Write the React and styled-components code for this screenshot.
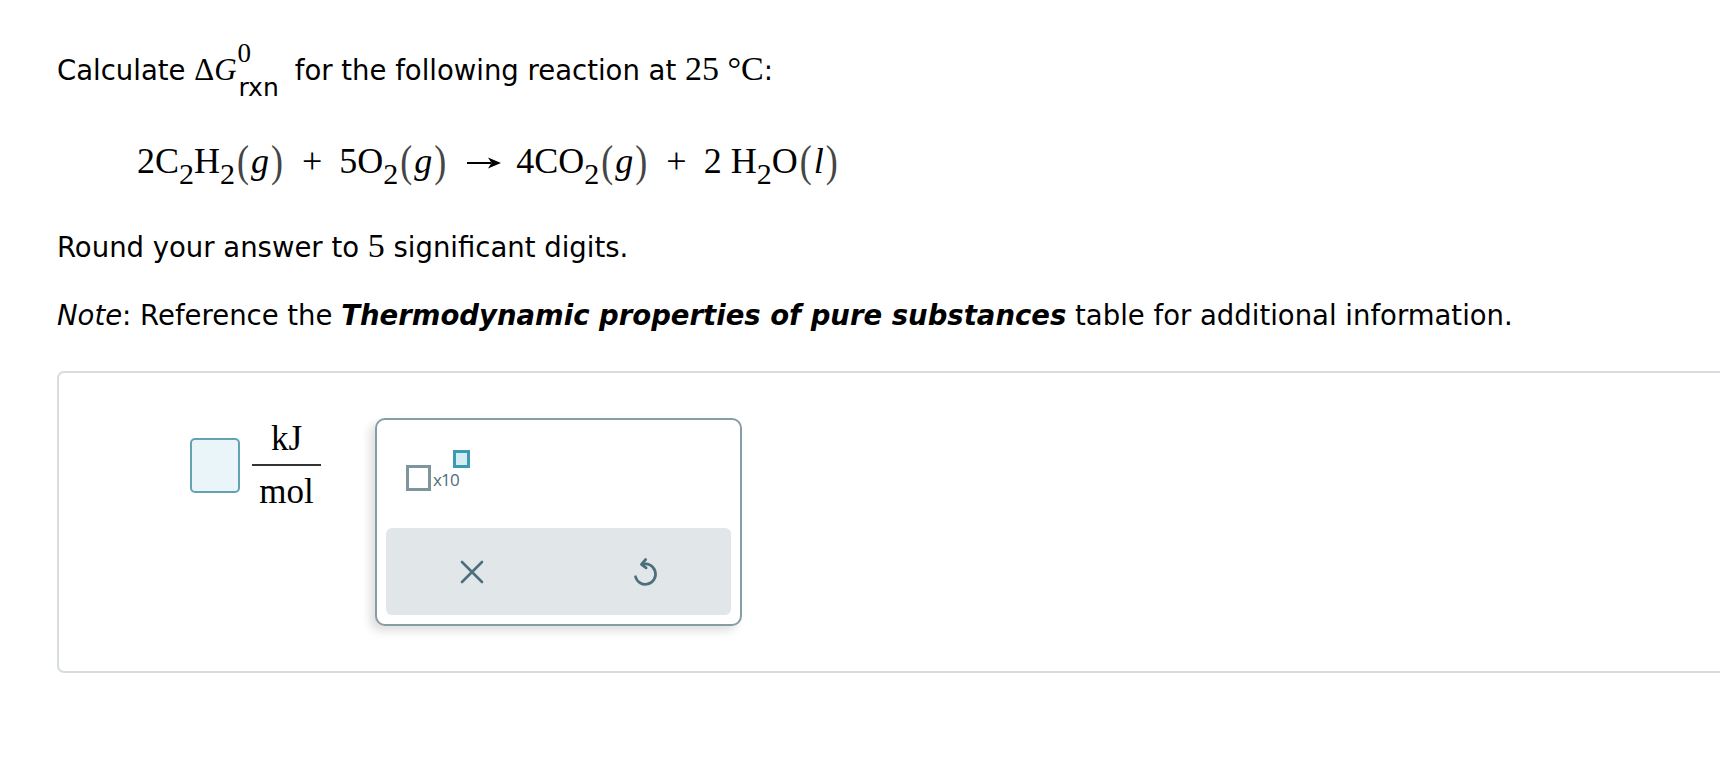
import React from "react";
import styled, { createGlobalStyle } from "styled-components";

const GlobalStyle = createGlobalStyle`
  html, body {
    margin: 0;
    padding: 0;
    background: #ffffff;
  }
  body {
    font-family: "DejaVu Sans", Verdana, sans-serif;
    color: #000;
    overflow: hidden;
  }
`;

const Page = styled.div`
  width: 1720px;
  height: 766px;
  overflow: hidden;
  padding: 50px 0 0 57px;
  box-sizing: border-box;
`;

const Line = styled.p`
  margin: ${(p) => p.$mt || 0}px 0 0 0;
  font-size: 27.5px;
  line-height: 40px;
  height: 40px;
  white-space: nowrap;
`;

const Serif = styled.span`
  font-family: "Liberation Serif", "Times New Roman", serif;
  font-size: ${(p) => p.$size || 34}px;
  font-style: ${(p) => (p.$italic ? "italic" : "normal")};
  line-height: 0;
`;

const Scripts = styled.span`
  display: inline-flex;
  flex-direction: column;
  vertical-align: 18px;
  line-height: 1;
  margin: -12px 16px -12px 1px;
`;

const Sup = styled.span`
  font-family: "Liberation Serif", serif;
  font-size: 27px;
`;

const Sub = styled.span`
  font-size: 25px;
  margin-top: 8px;
  margin-left: 1px;
`;

const Equation = styled.div`
  margin: 41px 0 0 80px;
  height: 60px;
  line-height: 60px;
  font-family: "Liberation Serif", "Times New Roman", serif;
  font-size: 36px;
  white-space: nowrap;
`;

const SubNum = styled.span`
  font-size: 30px;
  line-height: 0;
  vertical-align: -11px;
`;

const Paren = styled.span`
  display: inline-block;
  line-height: 0;
  font-size: 36px;
  color: #454545;
  transform: scaleY(1.22);
  margin: 0 2px;
`;

const Phase = styled.i`
  font-size: 36px;
`;

const Op = styled.span`
  display: inline-block;
  margin: 0 17px;
`;

const Arrow = styled.svg`
  vertical-align: middle;
  margin: 0 15px 0 18px;
  position: relative;
  top: -2px;
`;

const AnswerBox = styled.div`
  margin-top: 36px;
  width: 1720px;
  height: 302px;
  box-sizing: border-box;
  border: 2px solid #d6dcdf;
  border-radius: 7px;
  padding: 45px 0 0 131px;
  display: flex;
  align-items: flex-start;
`;

const AnswerGroup = styled.div`
  display: flex;
  align-items: center;
  margin-top: 3px;
  gap: 12px;
`;

const InputBox = styled.div`
  width: 50px;
  height: 55px;
  box-sizing: border-box;
  border: 2px solid #62a2b3;
  border-radius: 5px;
  background: #eaf5f9;
`;

const Fraction = styled.div`
  display: flex;
  flex-direction: column;
  align-items: center;
  width: 69px;
  font-family: "Liberation Serif", "Times New Roman", serif;
  font-size: 35px;
  line-height: 36px;
`;

const FracBar = styled.div`
  width: 69px;
  height: 2px;
  background: #333;
  margin: 7px 0 8px;
`;

const Keypad = styled.div`
  margin-left: 54px;
  width: 367px;
  height: 208px;
  box-sizing: border-box;
  border: 2px solid #879da5;
  border-radius: 10px;
  background: #fff;
  box-shadow: -5px 5px 10px rgba(0, 0, 0, 0.13);
  padding: 0 9px 9px;
  display: flex;
  flex-direction: column;
`;

const TemplateArea = styled.div`
  height: 108px;
  padding: 30px 0 0 20px;
  box-sizing: border-box;
`;

const Template = styled.div`
  display: inline-flex;
  align-items: flex-start;
`;

const MainSlot = styled.div`
  width: 25px;
  height: 26px;
  box-sizing: border-box;
  border: 3px solid #7e959d;
  margin-top: 15px;
`;

const Times = styled.span`
  font-family: "Open Sans", "Liberation Sans", sans-serif;
  font-size: 17px;
  line-height: 20px;
  color: #4e6e79;
  margin: 20px 0 0 2px;
  letter-spacing: -0.8px;
`;

const ExpSlot = styled.div`
  width: 17px;
  height: 18px;
  box-sizing: border-box;
  border: 3px solid #3d9ab4;
  background: #d3edf3;
  margin-left: -6px;
`;

const ButtonRow = styled.div`
  flex: 1;
  display: flex;
  background: #e1e6e9;
  border-radius: 6px;
`;

const KeyButton = styled.button`
  flex: 1;
  border: none;
  background: transparent;
  display: flex;
  align-items: center;
  justify-content: center;
  padding: 0;
  cursor: pointer;
`;

const ClearIcon = () => (
  <svg width="28" height="28" viewBox="0 0 28 28" fill="none">
    <path d="M4 4 L24 24 M24 4 L4 24" stroke="#4d6f7c" strokeWidth="2.6" strokeLinecap="round" />
  </svg>
);

const UndoIcon = () => (
  <svg width="32" height="34" viewBox="0 0 28 30" fill="none">
    <path
      d="M11.8 8.2 A9 9 0 1 1 5.6 19.2"
      stroke="#4d6f7c"
      strokeWidth="2.4"
      strokeLinecap="round"
    />
    <path
      d="M14.6 4 L10.8 8.2 L15 11.4"
      stroke="#4d6f7c"
      strokeWidth="2.4"
      strokeLinecap="round"
      strokeLinejoin="round"
    />
  </svg>
);

const Chem = ({ parts }) => (
  <span>
    {parts.map((p, i) =>
      typeof p === "number" ? <SubNum key={i}>{p}</SubNum> : <span key={i}>{p}</span>
    )}
  </span>
);

const PhaseGroup = ({ children }) => (
  <span>
    <Paren>(</Paren>
    <Phase>{children}</Phase>
    <Paren>)</Paren>
  </span>
);

export default function App() {
  return (
    <>
      <GlobalStyle />
      <Page>
        <Line>
          Calculate <Serif $size={31}>Δ</Serif>
          <Serif $size={31} $italic>G</Serif>
          <Scripts>
            <Sup>0</Sup>
            <Sub>rxn</Sub>
          </Scripts>
          for the following reaction at <Serif>25 °C</Serif>:
        </Line>

        <Equation>
          <Chem parts={["2C", 2, "H", 2]} />
          <PhaseGroup>g</PhaseGroup>
          <Op>+</Op>
          <Chem parts={["5O", 2]} />
          <PhaseGroup>g</PhaseGroup>
          <Arrow width="35" height="14" viewBox="0 0 35 14">
            <path d="M1 7 H25" stroke="#000" strokeWidth="2" />
            <path d="M35 7 L22 1.5 L25.5 7 L22 12.5 Z" fill="#000" />
          </Arrow>
          <Chem parts={["4CO", 2]} />
          <PhaseGroup>g</PhaseGroup>
          <Op>+</Op>
          <Chem parts={["2 H", 2, "O"]} />
          <PhaseGroup>l</PhaseGroup>
        </Equation>

        <Line $mt={36}>
          Round your answer to <Serif>5</Serif> significant digits.
        </Line>

        <Line $mt={28}>
          <i>Note</i>: Reference the <b><i>Thermodynamic properties of pure substances</i></b> table
          for additional information.
        </Line>

        <AnswerBox>
          <AnswerGroup>
            <InputBox />
            <Fraction>
              <span>kJ</span>
              <FracBar />
              <span>mol</span>
            </Fraction>
          </AnswerGroup>

          <Keypad>
            <TemplateArea>
              <Template>
                <MainSlot />
                <Times>x10</Times>
                <ExpSlot />
              </Template>
            </TemplateArea>
            <ButtonRow>
              <KeyButton aria-label="clear">
                <ClearIcon />
              </KeyButton>
              <KeyButton aria-label="undo">
                <UndoIcon />
              </KeyButton>
            </ButtonRow>
          </Keypad>
        </AnswerBox>
      </Page>
    </>
  );
}
